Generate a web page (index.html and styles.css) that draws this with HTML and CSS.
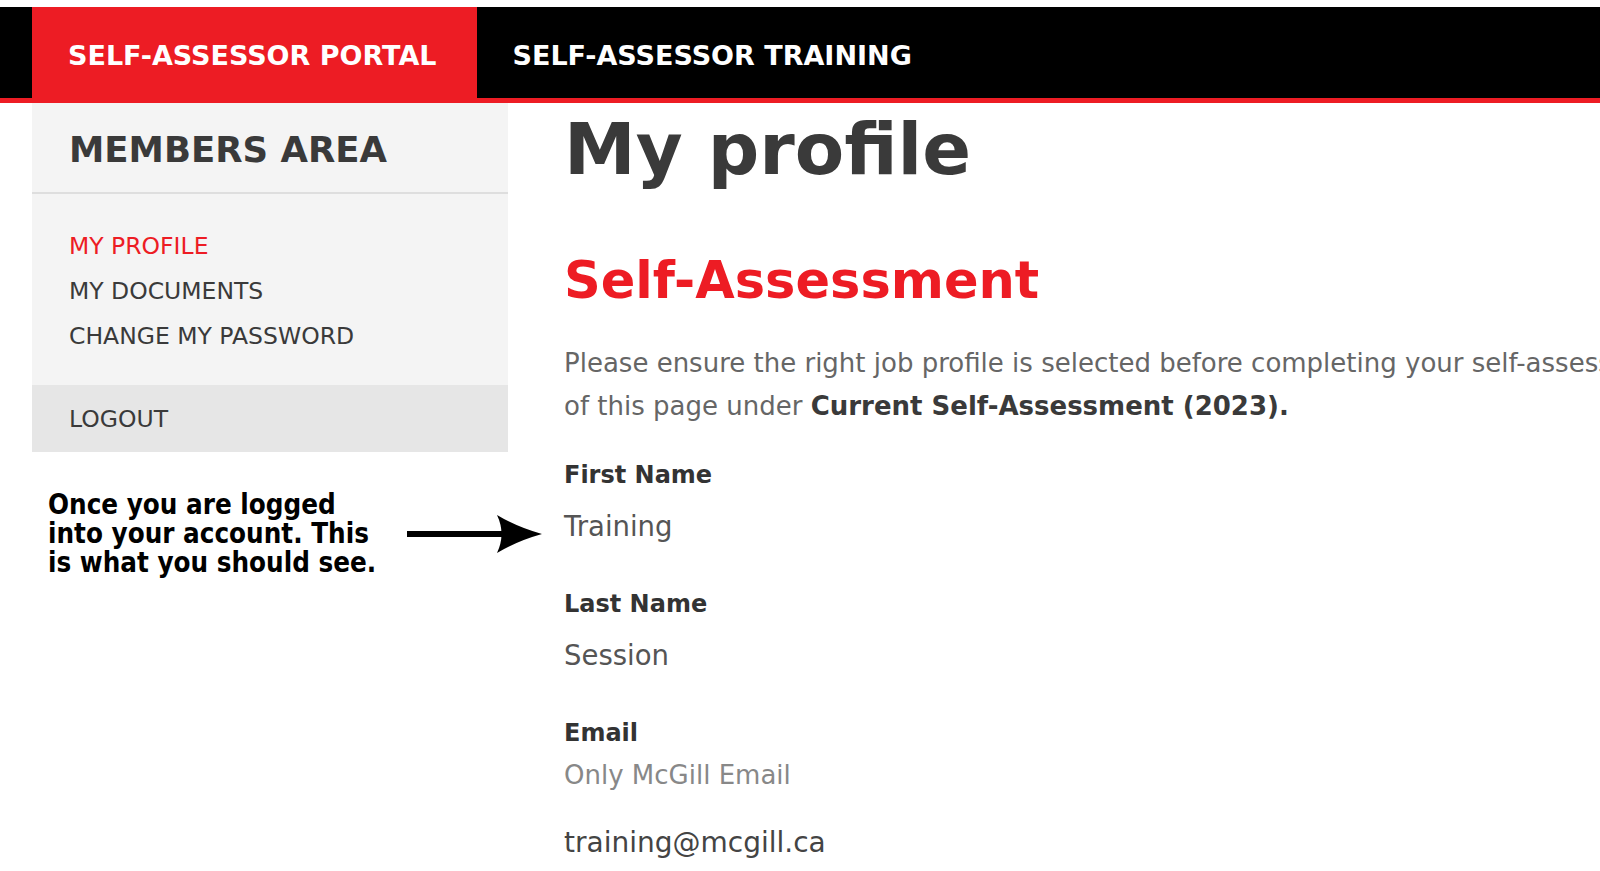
FILE: index.html
```html
<!DOCTYPE html>
<html lang="en">
<head>
    <meta charset="UTF-8">
    <meta name="viewport" content="width=device-width, initial-scale=1.0">
    <title>My profile - Self-Assessor Portal</title>
    <link rel="stylesheet" href="styles.css">
</head>
<body>
    <header class="topbar">
        <a href="#" class="topnav-link active">SELF-ASSESSOR PORTAL</a>
        <a href="#" class="topnav-link">SELF-ASSESSOR TRAINING</a>
    </header>

    <div class="page">
        <div class="left-col">
            <aside class="sidebar">
                <h2 class="sidebar-title">MEMBERS AREA</h2>
                <ul class="sidebar-menu">
                    <li><a href="#" class="current">MY PROFILE</a></li>
                    <li><a href="#">MY DOCUMENTS</a></li>
                    <li><a href="#">CHANGE MY PASSWORD</a></li>
                </ul>
                <a href="#" class="logout">LOGOUT</a>
            </aside>

            <!-- annotation added for the training guide -->
            <div class="note">
                <p class="note-text">Once you are logged<br>into your account. This<br>is what you should see.</p>
                <svg class="note-arrow" width="136" height="40" viewBox="0 0 136 40">
                    <rect x="0" y="17" width="96" height="6" fill="#000"/>
                    <path d="M90 1 Q110 13 135 20 Q110 27 90 39 Q99 20 90 1 Z" fill="#000"/>
                </svg>
            </div>
        </div>

        <main class="content">
            <h1 class="page-title">My profile</h1>
            <h2 class="section-title">Self-Assessment</h2>
            <p class="intro">Please ensure the right job profile is selected before completing your self-assessment at the bottom<br>of this page under <strong>Current Self-Assessment (2023).</strong></p>

            <div class="field">
                <div class="field-label">First Name</div>
                <div class="field-value">Training</div>
            </div>
            <div class="field">
                <div class="field-label">Last Name</div>
                <div class="field-value">Session</div>
            </div>
            <div class="field">
                <div class="field-label">Email</div>
                <div class="field-hint">Only McGill Email</div>
                <div class="field-value email">training@mcgill.ca</div>
            </div>
        </main>
    </div>
</body>
</html>
```

FILE: styles.css
```css
body {
    margin: 0;
    font-family: "DejaVu Sans", sans-serif;
    background: #fff;
    color: #3a3a3a;
    overflow: hidden;
}
a {
    text-decoration: none;
}

/* top bar */
.topbar {
    display: flex;
    margin-top: 7px;
    height: 91px;
    padding-left: 32px;
    background: #000;
    border-bottom: 5px solid #ed1c24;
}
.topnav-link {
    display: flex;
    align-items: center;
    padding: 5px 40px 0 36px;
    color: #fff;
    font-size: 27px;
    font-weight: 700;
    white-space: nowrap;
}
.topnav-link.active {
    background: #ed1c24;
}

/* page layout */
.page {
    display: flex;
    gap: 56px;
    padding-left: 32px;
}
.left-col {
    width: 476px;
    flex-shrink: 0;
}

/* sidebar */
.sidebar {
    background: #f4f4f4;
}
.sidebar-title {
    display: flex;
    align-items: center;
    height: 86px;
    margin: 0;
    padding: 3px 37px 0;
    font-size: 35.5px;
    font-weight: 700;
    color: #3a3a3a;
    border-bottom: 2px solid #dedede;
}
.sidebar-menu {
    list-style: none;
    margin: 0;
    padding: 29.5px 37px 26.5px;
}
.sidebar-menu li {
    font-size: 23.5px;
    line-height: 45px;
}
.sidebar-menu a {
    color: #3a3a3a;
}
.sidebar-menu a.current {
    color: #ed1c24;
}
.logout {
    display: block;
    height: 67px;
    line-height: 68px;
    padding: 0 37px;
    background: #e6e6e6;
    font-size: 23.5px;
    color: #3a3a3a;
}

/* annotation */
.note {
    display: flex;
    align-items: center;
    gap: 32px;
    margin-top: 38px;
    padding-left: 16px;
}
.note-text {
    margin: 0;
    width: 327px;
    font-family: "DejaVu Sans Condensed", "DejaVu Sans", sans-serif;
    font-stretch: condensed;
    font-size: 27.5px;
    font-weight: 700;
    line-height: 29px;
    color: #000;
    white-space: nowrap;
}
.note-arrow {
    flex-shrink: 0;
}

/* main content */
.content {
    flex: 1;
    white-space: nowrap;
}
.page-title {
    margin: 0;
    font-size: 72px;
    font-weight: 700;
    line-height: 93px;
    color: #3a3a3a;
}
.section-title {
    margin: 50px 0 0;
    font-size: 51px;
    font-weight: 700;
    line-height: 70px;
    color: #ed1c24;
}
.intro {
    margin: 26px 0 0;
    font-size: 26px;
    line-height: 43px;
    color: #666;
}
.intro strong {
    color: #3a3a3a;
}
.field {
    margin-top: 27px;
}
.field + .field {
    margin-top: 38px;
}
.field-label {
    font-size: 24px;
    font-weight: 700;
    line-height: 40px;
    color: #333;
}
.field-value {
    margin-top: 11px;
    font-size: 27.5px;
    line-height: 40px;
    color: #555;
}
.field-hint {
    margin-top: 2px;
    font-size: 26px;
    line-height: 40px;
    color: #888;
}
.field-value.email {
    margin-top: 28px;
    font-size: 28px;
    color: #444;
}
```
